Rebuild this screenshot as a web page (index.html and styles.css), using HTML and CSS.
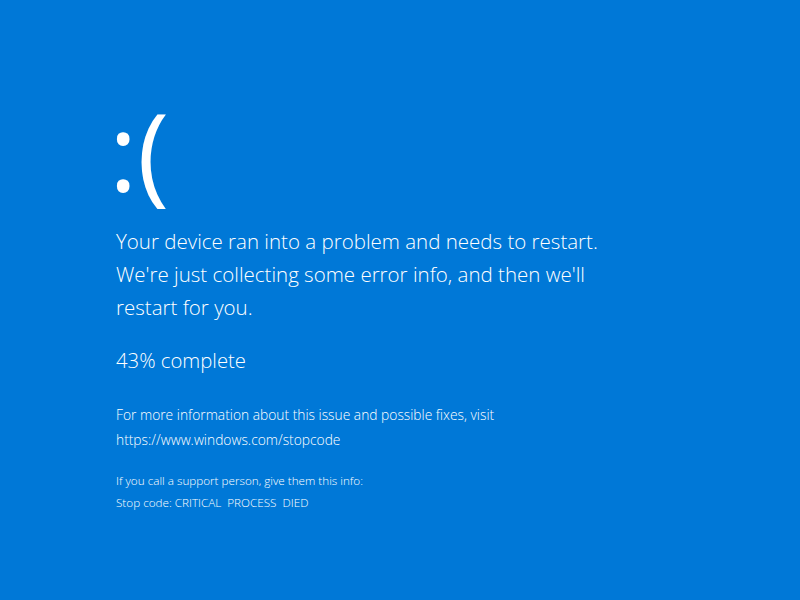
FILE: index.html
```html
<!DOCTYPE html>
<html lang="en">
<head>
<meta charset="utf-8">
<title>Stop code</title>
<link rel="stylesheet" href="styles.css">
</head>
<body>
<main class="screen">
  <div class="face">:(</div>
  <p class="lead">Your device ran into a problem and needs to restart. We're just collecting some error info, and then we'll restart for you.</p>
  <p class="progress">43% complete</p>
  <p class="info">For more information about this issue and possible fixes, visit<br>https://www.windows.com/stopcode</p>
  <p class="support">If you call a support person, give them this info:<br>Stop code: CRITICAL&nbsp; PROCESS&nbsp; DIED</p>
</main>
</body>
</html>
```
FILE: styles.css
```css
html, body {
  margin: 0;
  padding: 0;
  background: #0078d7;
}
.screen {
  width: 800px;
  height: 600px;
  box-sizing: border-box;
  padding: 86px 0 0 116px;
  color: #ffffff;
  font-family: "Open Sans", "Noto Sans", sans-serif;
  font-weight: 300;
}
.face {
  font-size: 108px;
  line-height: 130px;
  font-weight: 400;
  margin-left: -7px;
}
.lead {
  width: 500px;
  font-size: 20.5px;
  line-height: 33px;
  margin: 9px 0 0;
}
.progress {
  font-size: 20.3px;
  line-height: 33px;
  margin: 20px 0 0;
}
.info {
  font-size: 13.8px;
  line-height: 25px;
  margin: 25px 0 0;
}
.support {
  font-size: 11.7px;
  line-height: 22px;
  margin: 17px 0 0;
}
```
